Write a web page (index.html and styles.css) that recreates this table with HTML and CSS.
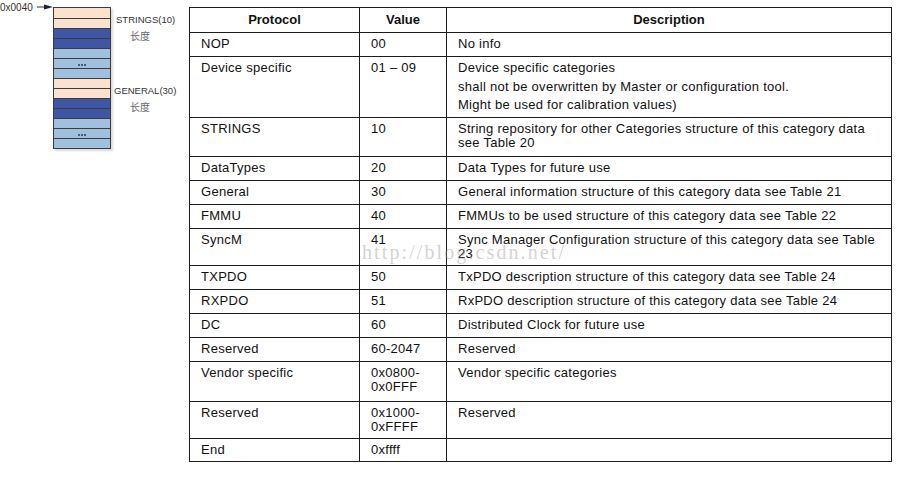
FILE: index.html
```html
<!DOCTYPE html>
<html>
<head>
<meta charset="utf-8">
<link rel="stylesheet" href="styles.css">
</head>
<body>
<div class="page">
  <div class="diagram">
    <div class="addr">0x0040</div>
    <svg class="arrow" width="18" height="8" viewBox="0 0 18 8">
      <line x1="2" y1="4" x2="11" y2="4" stroke="#333" stroke-width="1"/>
      <polygon points="9,1.5 18,4 9,6.5" fill="#222"/>
    </svg>
    <div class="stack">
      <div class="strip peach"></div>
      <div class="strip peach"></div>
      <div class="strip dark"></div>
      <div class="strip dark"></div>
      <div class="strip light"></div>
      <div class="strip light"><span class="dot"></span><span class="dot"></span><span class="dot"></span></div>
      <div class="strip light"></div>
      <div class="strip peach"></div>
      <div class="strip peach"></div>
      <div class="strip dark"></div>
      <div class="strip dark"></div>
      <div class="strip light"></div>
      <div class="strip light"><span class="dot"></span><span class="dot"></span><span class="dot"></span></div>
      <div class="strip light"></div>
    </div>
    <div class="labels">
      <div class="lbl lbl-strings">STRINGS(10)</div>
      <div class="lbl lbl-len">长度</div>
      <div class="lbl lbl-general">GENERAL(30)</div>
      <div class="lbl lbl-len">长度</div>
    </div>
  </div>
  <div class="table-wrap">
    <table class="proto">
      <colgroup>
        <col class="c1">
        <col class="c2">
        <col class="c3">
      </colgroup>
      <thead>
        <tr><th>Protocol</th><th>Value</th><th>Description</th></tr>
      </thead>
      <tbody>
        <tr><td>NOP</td><td>00</td><td>No info</td></tr>
        <tr class="dev"><td>Device specific</td><td>01 – 09</td><td><div>Device specific categories</div><div class="para">shall not be overwritten by Master or configuration tool.</div><div class="para">Might be used for calibration values)</div></td></tr>
        <tr class="pb6"><td>STRINGS</td><td>10</td><td>String repository for other Categories structure of this category data<br>see Table 20</td></tr>
        <tr><td>DataTypes</td><td>20</td><td>Data Types for future use</td></tr>
        <tr><td>General</td><td>30</td><td>General information structure of this category data see Table 21</td></tr>
        <tr><td>FMMU</td><td>40</td><td>FMMUs to be used structure of this category data see Table 22</td></tr>
        <tr class="pb4"><td>SyncM</td><td>41</td><td>Sync Manager Configuration structure of this category data see Table<br>23</td></tr>
        <tr><td>TXPDO</td><td>50</td><td>TxPDO description structure of this category data see Table 24</td></tr>
        <tr><td>RXPDO</td><td>51</td><td>RxPDO description structure of this category data see Table 24</td></tr>
        <tr><td>DC</td><td>60</td><td>Distributed Clock for future use</td></tr>
        <tr><td>Reserved</td><td>60-2047</td><td>Reserved</td></tr>
        <tr class="pb7"><td>Vendor specific</td><td>0x0800-<br>0x0FFF</td><td>Vendor specific categories</td></tr>
        <tr class="pb4"><td>Reserved</td><td>0x1000-<br>0xFFFF</td><td>Reserved</td></tr>
        <tr class="pb4"><td>End</td><td>0xffff</td><td></td></tr>
      </tbody>
    </table>
    <div class="watermark">http://blog.csdn.net/</div>
  </div>
</div>
</body>
</html>
```
FILE: styles.css
```css
html, body {
  margin: 0;
  padding: 0;
  background: #ffffff;
}

.page {
  display: flex;
  align-items: flex-start;
}

/* ---------- left diagram ---------- */
.diagram {
  width: 189px;
  flex: none;
  display: flex;
  align-items: flex-start;
  padding-top: 3px;
  font-family: "Liberation Sans", Arial, "Noto Sans CJK SC", sans-serif;
  color: #444;
}

.addr {
  width: 35px;
  font-size: 10px;
  line-height: 10px;
  color: #333;
}

.arrow {
  display: block;
  flex: none;
}

.stack {
  margin-top: 4px;
  width: 56px;
  border: 1px solid #3c3c3c;
  box-shadow: 2px 2px 2px rgba(0, 0, 0, 0.15);
  display: flex;
  flex-direction: column;
}

.strip {
  height: 10px;
  flex: none;
  box-sizing: border-box;
  border-top: 1px solid #3c3c3c;
  display: flex;
  justify-content: center;
  align-items: flex-end;
  gap: 1px;
  padding-bottom: 2px;
}

.strip:first-child {
  border-top: none;
}

.peach { background: #fbe2cf; }
.dark { background: #3f56a5; }
.light { background: #a0c0dd; }

.dot {
  width: 2px;
  height: 2px;
  background: #4a5a78;
}

.labels {
  margin-left: 5px;
  padding-top: 11px;
}

.lbl {
  font-size: 9.5px;
  line-height: 11px;
  color: #333;
  white-space: nowrap;
}

.lbl-len {
  margin-top: 5px;
  margin-left: 14px;
  font-family: "Noto Sans CJK SC", sans-serif;
  font-size: 10px;
  color: #666;
}

.lbl-general {
  margin-top: 44px;
  margin-left: -2px;
}

/* ---------- table ---------- */
.table-wrap {
  position: relative;
  margin-top: 7px;
}

.proto {
  border-collapse: collapse;
  table-layout: fixed;
  width: 702px;
  font-family: "Liberation Sans", Arial, sans-serif;
  font-size: 13px;
  line-height: 14px;
  color: #111;
}

.c1 { width: 170px; }
.c2 { width: 87px; }
.c3 { width: 445px; }

.proto th,
.proto td {
  border: 1px solid #1c1c1c;
  padding: 4px 6px 5px 11px;
  vertical-align: top;
  text-align: left;
  white-space: nowrap;
  letter-spacing: 0.27px;
}

.proto th {
  padding: 5px 6px 5px;
  text-align: center;
  font-weight: bold;
  letter-spacing: 0;
}

.proto .para {
  margin-top: 4.5px;
}

.proto .pb6 td { padding-bottom: 6px; }
.proto .pb4 td { padding-bottom: 4px; }
.proto .pb7 td { padding-bottom: 7px; }

.watermark {
  position: absolute;
  left: 173px;
  top: 235px;
  font-family: "Liberation Serif", "Times New Roman", serif;
  font-size: 20px;
  line-height: 20px;
  letter-spacing: 2.1px;
  color: rgba(140, 140, 140, 0.4);
  pointer-events: none;
  white-space: nowrap;
}
```
